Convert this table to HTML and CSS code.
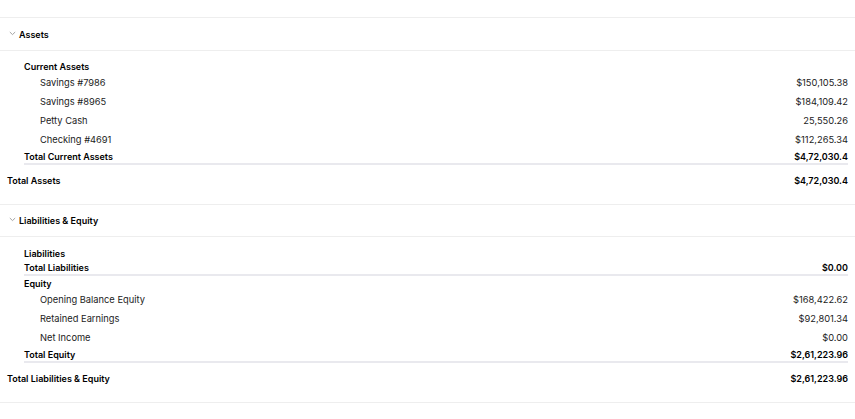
FILE: index.html
```html
<!DOCTYPE html>
<html>
<head>
  <link rel="stylesheet" href="styles.css">
</head>
<body>
  <div class="report">
    <!-- Assets -->
    <section class="section">
      <div class="section-header">
        <svg class="chevron" width="7" height="5" viewBox="0 0 7 5"><path d="M0.8 1 L3.5 3.6 L6.2 1" fill="none" stroke="#9a9a9a" stroke-width="0.9"/></svg>
        <span>Assets</span>
      </div>
      <div class="section-body">
        <div class="group">
          <div class="group-title">Current Assets</div>
          <div class="item"><span>Savings #7986</span><span>$150,105.38</span></div>
          <div class="item"><span>Savings #8965</span><span>$184,109.42</span></div>
          <div class="item"><span>Petty Cash</span><span>25,550.26</span></div>
          <div class="item"><span>Checking #4691</span><span>$112,265.34</span></div>
          <div class="group-total"><span>Total Current Assets</span><span>$4,72,030.4</span></div>
        </div>
        <div class="section-total"><span>Total Assets</span><span>$4,72,030.4</span></div>
      </div>
    </section>

    <!-- Liabilities & Equity -->
    <section class="section">
      <div class="section-header">
        <svg class="chevron" width="7" height="5" viewBox="0 0 7 5"><path d="M0.8 1 L3.5 3.6 L6.2 1" fill="none" stroke="#9a9a9a" stroke-width="0.9"/></svg>
        <span>Liabilities &amp; Equity</span>
      </div>
      <div class="section-body">
        <div class="group">
          <div class="group-title">Liabilities</div>
          <div class="group-total"><span>Total Liabilities</span><span>$0.00</span></div>
        </div>
        <div class="group">
          <div class="group-title">Equity</div>
          <div class="item"><span>Opening Balance Equity</span><span>$168,422.62</span></div>
          <div class="item"><span>Retained Earnings</span><span>$92,801.34</span></div>
          <div class="item"><span>Net Income</span><span>$0.00</span></div>
          <div class="group-total"><span>Total Equity</span><span>$2,61,223.96</span></div>
        </div>
        <div class="section-total"><span>Total Liabilities &amp; Equity</span><span>$2,61,223.96</span></div>
      </div>
    </section>
  </div>
</body>
</html>
```

FILE: styles.css
```css
body {
  margin: 0;
  padding-top: 17px;
  font-family: "Inter", "Liberation Sans", sans-serif;
  font-size: 9px;
  color: #1a1a1a;
  background: #ffffff;
}

.section {
  border-top: 1px solid #eeeeee;
}

.section:last-child {
  border-bottom: 1px solid #eeeeee;
}

.section-header {
  display: flex;
  align-items: center;
  height: 31px;
  padding-left: 9px;
  border-bottom: 1px solid #eeeeee;
  font-weight: 600;
  color: #000000;
}

.section:first-child .section-header {
  height: 32px;
}

.chevron {
  margin-right: 3px;
  margin-top: -2px;
}

.section-body {
  padding: 8px 7px 17px 7px;
}

.section:last-child .section-body {
  padding-top: 9px;
}

.group-title {
  height: 14px;
  line-height: 15px;
  padding-left: 17px;
  font-weight: 600;
  color: #000000;
}

.item {
  display: flex;
  justify-content: space-between;
  height: 19px;
  line-height: 19px;
  padding-left: 33px;
  font-size: 9.3px;
  color: #222222;
}

.group-total {
  display: flex;
  justify-content: space-between;
  height: 14px;
  line-height: 15px;
  margin-left: 17px;
  border-bottom: 2px solid #e9e9ee;
  font-weight: 600;
  color: #000000;
}

.section-total {
  display: flex;
  justify-content: space-between;
  height: 14px;
  line-height: 15px;
  margin-top: 8px;
  font-weight: 600;
  color: #000000;
}
```
